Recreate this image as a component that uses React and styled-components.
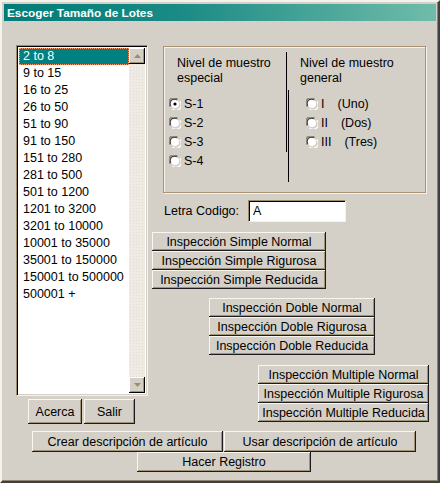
import React from "react"
import styled, { createGlobalStyle } from "styled-components"

const Global = createGlobalStyle`
  html, body {
    margin: 0;
    padding: 0;
    background: #d4d0c8;
  }
  * {
    box-sizing: border-box;
  }
`

const Window = styled.div`
  width: 440px;
  height: 483px;
  background: #d4d0c8;
  border: 2px solid;
  border-color: #f4f2ec #404040 #404040 #f4f2ec;
  box-shadow: inset -1px -1px #8c8270;
  font-family: "Liberation Sans", Arial, sans-serif;
  font-size: 12.5px;
  color: #000;
  display: flex;
  flex-direction: column;
`

const TitleBar = styled.div`
  margin: 2px 2px 0 2px;
  height: 17px;
  background: linear-gradient(90deg, #007c78 0%, #1a8a84 40%, #70bcaa 100%);
  color: #fff;
  font-weight: bold;
  font-size: 11.8px;
  padding-left: 3px;
  display: flex;
  align-items: center;
`

const Main = styled.div`
  display: flex;
  padding: 24px 0 0 14px;
`

const LeftCol = styled.div`
  display: flex;
  flex-direction: column;
  width: 132px;
`

const ListBox = styled.div`
  height: 351px;
  display: flex;
  background: #fff;
  border: 1px solid;
  border-color: #9c8a68 #f6f2e8 #f6f2e8 #9c8a68;
  box-shadow: inset 1px 1px #000, inset -1px -1px #d4d0c8;
  padding: 2px 0 2px 2px;
`

const Items = styled.div`
  flex: 1;
  display: flex;
  flex-direction: column;
`

const Item = styled.div`
  height: 17px;
  line-height: 15px;
  padding-left: 3px;
  white-space: nowrap;
  background: ${(p) => (p.$selected ? "#008080" : "transparent")};
  color: ${(p) => (p.$selected ? "#fff" : "#000")};
  border: 1px dotted ${(p) => (p.$selected ? "#ff9a6a" : "transparent")};
`

const ScrollBar = styled.div`
  width: 16px;
  display: flex;
  flex-direction: column;
  justify-content: space-between;
  background-color: #efebe4;
  background-image: radial-gradient(#e2ddd2 0.6px, transparent 0.8px);
  background-size: 3px 3px;
  margin-right: 2px;
`

const ArrowButton = styled.div`
  width: 16px;
  height: 16px;
  background: #d4d0c8;
  box-shadow: inset -1px -1px #000, inset 1px 1px #fff, inset -2px -2px #a09478;
  display: flex;
  align-items: center;
  justify-content: center;
`

const ButtonRow = styled.div`
  display: flex;
  gap: 2px;
  margin: 3px 0 0 12px;
`

const Button = styled.button`
  width: ${(p) => p.$w}px;
  height: ${(p) => p.$h || 19}px;
  padding: 0;
  border: none;
  background: #d4d0c8;
  font-family: "Liberation Sans", Arial, sans-serif;
  font-size: 12.5px;
  color: #000;
  white-space: nowrap;
  box-shadow: inset -1px -1px #1c1c1c, inset 1px 1px #f8f6f0, inset -2px -2px #a09478;
`

const RightCol = styled.div`
  display: flex;
  flex-direction: column;
  margin-left: 4px;
`

const GroupBox = styled.div`
  width: 263px;
  height: 147px;
  margin: 1px 0 0 11px;
  border: 1px solid #a89474;
  box-shadow: inset 1px 1px #f6f2e8, 1px 1px #f6f2e8;
  display: flex;
`

const GroupCol = styled.div`
  display: flex;
  flex-direction: column;
  width: ${(p) => (p.$w ? `${p.$w}px` : "auto")};
  padding: 9px 0 0 ${(p) => p.$pad}px;
`

const GroupHead = styled.div`
  line-height: 15px;
  margin-left: ${(p) => p.$indent}px;
  margin-bottom: 8px;
`

const RadioRow = styled.div`
  height: 19px;
  display: flex;
  align-items: center;
  gap: 3px;
  margin-left: ${(p) => p.$indent || 0}px;
`

const Divider = styled.div`
  display: flex;
  gap: 1px;
  padding-top: 5px;
`

const Line = styled.div`
  width: 1px;
  height: ${(p) => p.$h}px;
  margin-top: ${(p) => p.$top}px;
  background: #000;
`

const LabelGap = styled.span`
  margin-left: 13px;
`

const LetraRow = styled.div`
  display: flex;
  align-items: center;
  margin: 7px 0 0 12px;
  gap: 9px;
`

const TextBox = styled.div`
  width: 98px;
  height: 22px;
  background: #fff;
  border: 1px solid;
  border-color: #9c8a68 #f6f2e8 #f6f2e8 #9c8a68;
  box-shadow: inset 1px 1px #000;
  padding: 3px 0 0 4px;
  line-height: 15px;
`

const Stack = styled.div`
  display: flex;
  flex-direction: column;
  align-items: flex-start;
  margin: ${(p) => p.$top}px 0 0 ${(p) => p.$left}px;
`

const Bottom = styled.div`
  display: flex;
  flex-direction: column;
  align-items: center;
  width: 384px;
  margin: 7px 0 0 30px;
`

const BottomRow = styled.div`
  display: flex;
  gap: 1px;
`

const Radio = ({ checked }) => (
  <svg width="12" height="12" viewBox="0 0 12 12">
    <path d="M1.2 8.5A5 5 0 0 1 8.5 1.2" stroke="#8c8270" strokeWidth="1.2" fill="none" />
    <path d="M2.3 8.2A4 4 0 0 1 8.2 2.3" stroke="#404040" strokeWidth="1.2" fill="none" />
    <circle cx="6" cy="6" r="4" fill="#fff" />
    <path d="M3.5 10.8A5 5 0 0 0 10.8 3.5" stroke="#fff" strokeWidth="1.2" fill="none" />
    {checked && <circle cx="6" cy="6" r="1.6" fill="#000" />}
  </svg>
)

const Arrow = ({ up }) => (
  <svg width="7" height="4" viewBox="0 0 7 4">
    <path d={up ? "M3.5 0L7 4H0z" : "M0 0h7L3.5 4z"} fill="#a08c68" />
  </svg>
)

const lots = [
  "2 to 8",
  "9 to 15",
  "16 to 25",
  "26 to 50",
  "51 to 90",
  "91 to 150",
  "151 to 280",
  "281 to 500",
  "501 to 1200",
  "1201 to 3200",
  "3201 to 10000",
  "10001 to 35000",
  "35001 to 150000",
  "150001 to 500000",
  "500001 +",
]

const general = [
  ["I", "(Uno)"],
  ["II", "(Dos)"],
  ["III", "(Tres)"],
]

export default function App() {
  return (
    <>
      <Global />
      <Window>
        <TitleBar>Escoger Tamaño de Lotes</TitleBar>
        <Main>
          <LeftCol>
            <ListBox>
              <Items>
                {lots.map((l, i) => (
                  <Item key={l} $selected={i === 0}>
                    {l}
                  </Item>
                ))}
              </Items>
              <ScrollBar>
                <ArrowButton>
                  <Arrow up />
                </ArrowButton>
                <ArrowButton>
                  <Arrow />
                </ArrowButton>
              </ScrollBar>
            </ListBox>
            <ButtonRow>
              <Button $w={54} $h={25}>Acerca</Button>
              <Button $w={51} $h={25}>Salir</Button>
            </ButtonRow>
          </LeftCol>
          <RightCol>
            <GroupBox>
              <GroupCol $w={122} $pad={5}>
                <GroupHead $indent={8}>
                  Nivel de muestro
                  <br />
                  especial
                </GroupHead>
                {["S-1", "S-2", "S-3", "S-4"].map((s, i) => (
                  <RadioRow key={s}>
                    <Radio checked={i === 0} />
                    {s}
                  </RadioRow>
                ))}
              </GroupCol>
              <Divider>
                <Line $h={100} $top={0} />
                <Line $h={92} $top={38} />
              </Divider>
              <GroupCol $pad={11}>
                <GroupHead $indent={0}>
                  Nivel de muestro
                  <br />
                  general
                </GroupHead>
                {general.map(([n, w]) => (
                  <RadioRow key={n} $indent={6}>
                    <Radio />
                    <span>
                      {n}
                      <LabelGap>{w}</LabelGap>
                    </span>
                  </RadioRow>
                ))}
              </GroupCol>
            </GroupBox>
            <LetraRow>
              <span>Letra Codigo:</span>
              <TextBox>A</TextBox>
            </LetraRow>
            <Stack $top={10} $left={0}>
              <Button $w={174}>Inspección Simple Normal</Button>
              <Button $w={174}>Inspección Simple Rigurosa</Button>
              <Button $w={174}>Inspección Simple Reducida</Button>
            </Stack>
            <Stack $top={9} $left={57}>
              <Button $w={166}>Inspección Doble Normal</Button>
              <Button $w={166}>Inspección Doble Rigurosa</Button>
              <Button $w={166}>Inspección Doble Reducida</Button>
            </Stack>
            <Stack $top={10} $left={106}>
              <Button $w={171}>Inspección Multiple Normal</Button>
              <Button $w={171}>Inspección Multiple Rigurosa</Button>
              <Button $w={171}>Inspección Multiple Reducida</Button>
            </Stack>
          </RightCol>
        </Main>
        <Bottom>
          <BottomRow>
            <Button $w={191} $h={21}>Crear descripción de artículo</Button>
            <Button $w={192} $h={21}>Usar descripción de artículo</Button>
          </BottomRow>
          <Button $w={174} $h={20}>Hacer Registro</Button>
        </Bottom>
      </Window>
    </>
  )
}
